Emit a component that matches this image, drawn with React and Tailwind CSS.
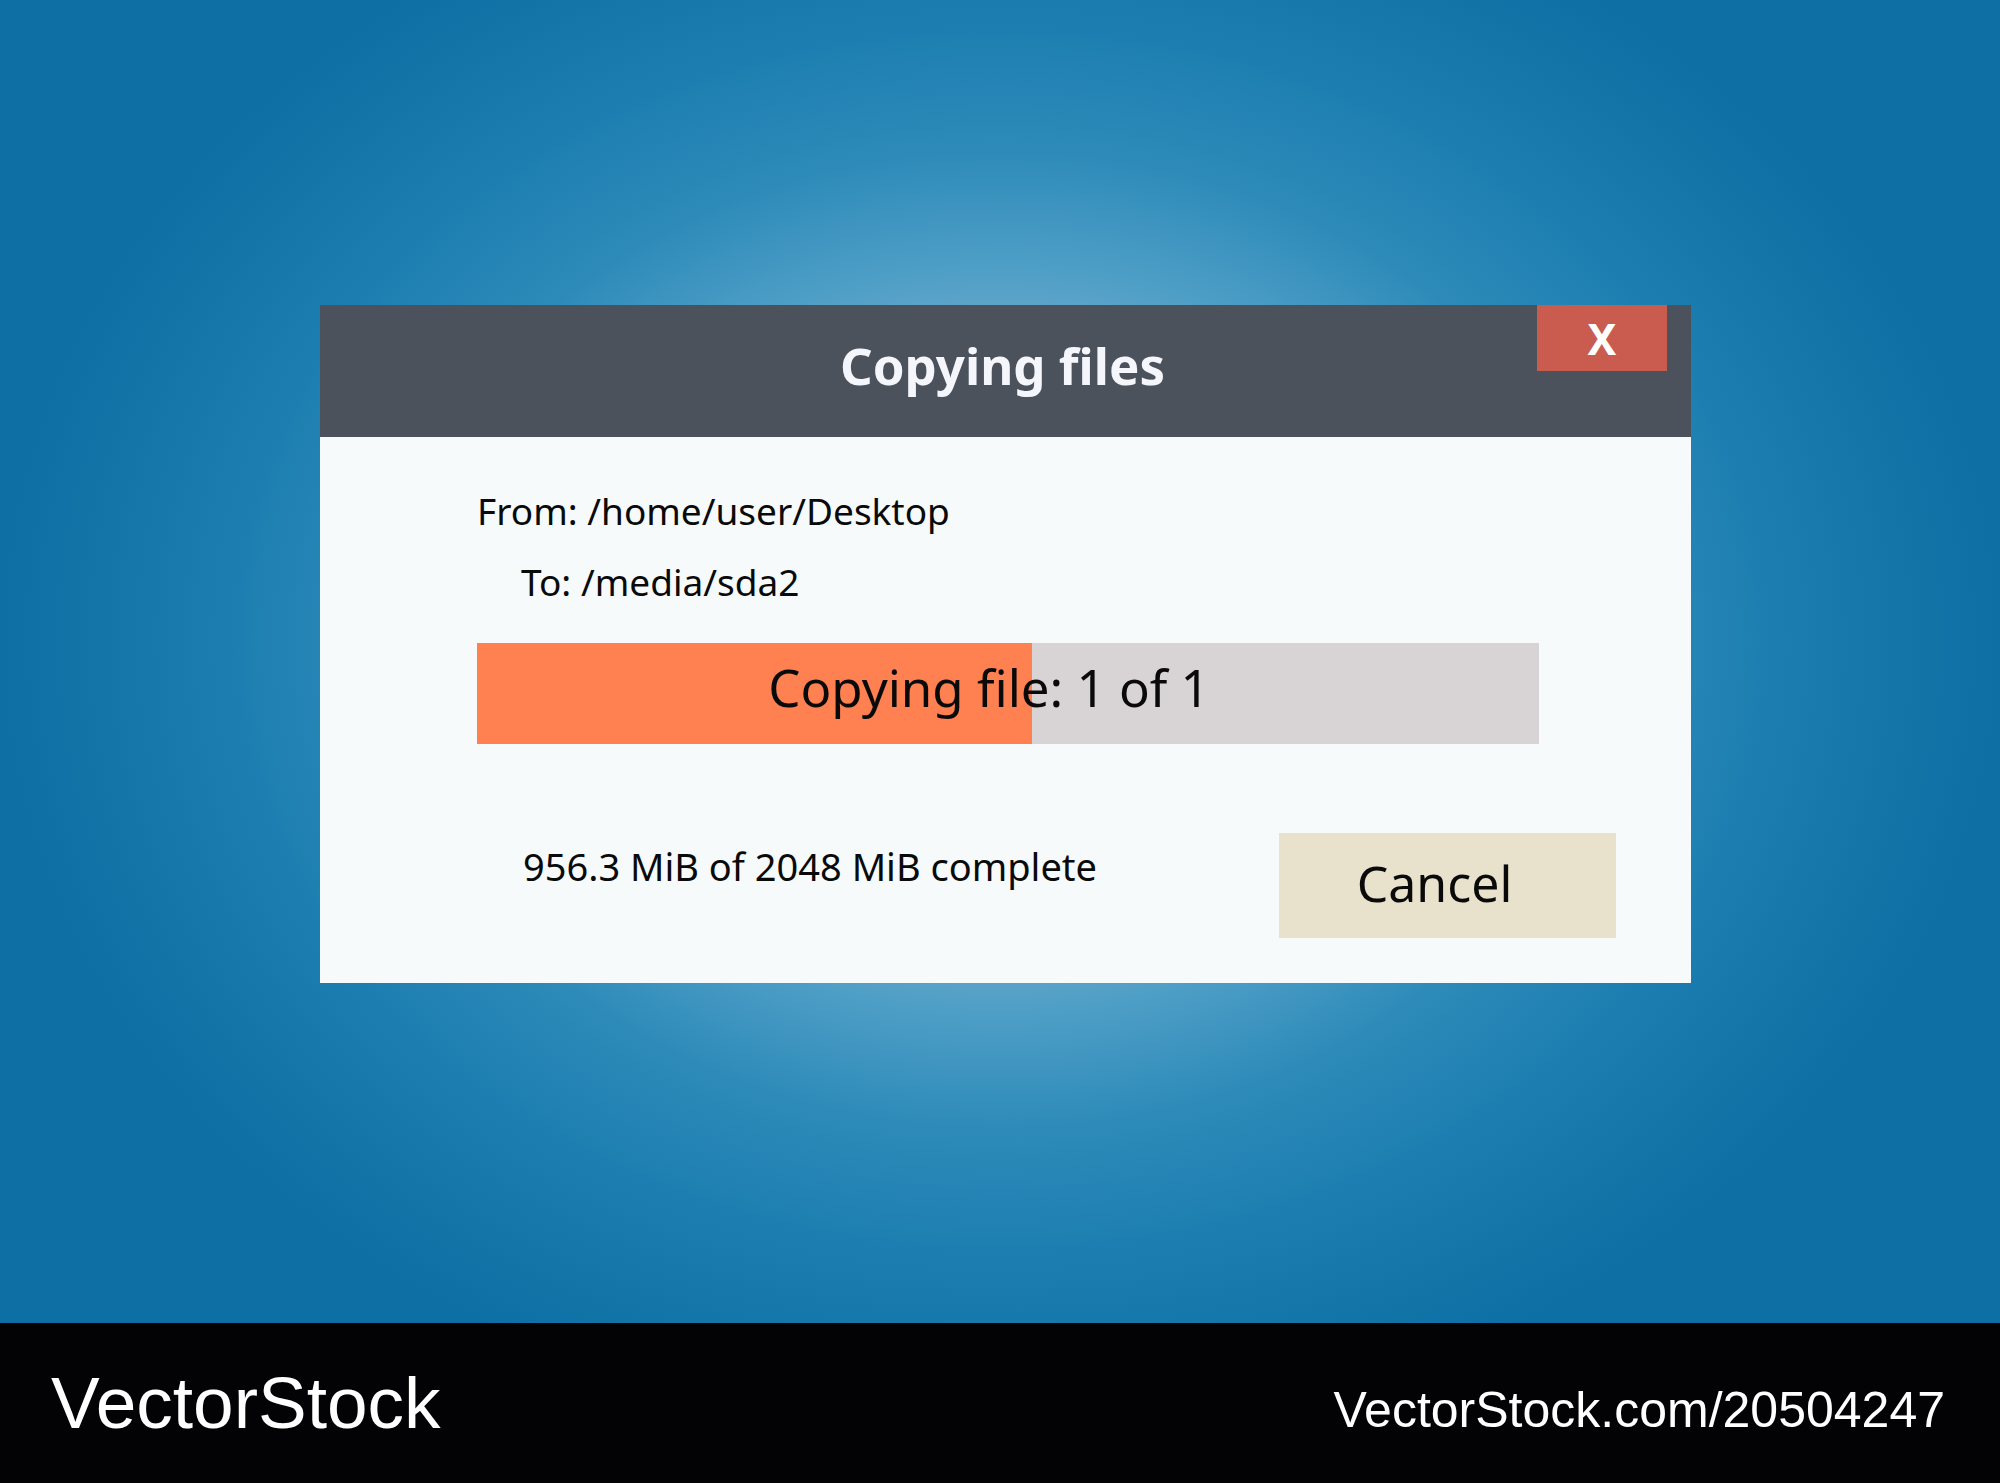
export default function App() {
  return (
    <div className="w-[2000px] h-[1483px] flex flex-col overflow-hidden">
      <div className="h-[1323px] pt-[305px] pl-[320px] bg-[radial-gradient(ellipse_1000px_800px_at_50%_640px,#7db6d4_0%,#6eaacb_32%,#62a5ca_40%,#4d9ec6_47%,#2e8bb9_61%,#1b7db0_78%,#1475a8_90%,#0d6fa4_100%)]">
        <div className="w-[1371px] h-[678px] flex flex-col bg-[#f6fafa] font-['Noto_Sans',sans-serif]">
          <div className="relative h-[132px] flex items-center justify-center pb-[12px] bg-[#4b525c]">
            <span className="text-[51px] leading-none font-bold text-[#f5f6fb] pr-[6px]">Copying files</span>
            <div className="absolute top-0 right-[24px] w-[130px] h-[66px] flex items-center justify-center bg-[#c95c4f]">
              <span className="text-[43px] leading-none font-bold text-white">X</span>
            </div>
          </div>
          <div className="flex-1 flex flex-col pl-[157px] pt-[55px] text-[#0a0a0a]">
            <div className="text-[37px] leading-none">From: /home/user/Desktop</div>
            <div className="text-[37px] leading-none mt-[34px] pl-[44px]">To: /media/sda2</div>
            <div className="relative mt-[43px] w-[1062px] h-[101px] bg-[#d8d4d5] flex items-center justify-center pb-[13px] pr-[38px]">
              <div className="absolute left-0 top-0 h-full w-[555px] bg-[#ff8050]"></div>
              <span className="relative text-[51px] leading-none">Copying file: 1 of 1</span>
            </div>
            <div className="flex items-start mt-[89px]">
              <div className="w-[802px] pl-[46px] mt-[14px] text-[38px] leading-none">956.3 MiB of 2048 MiB complete</div>
              <div className="w-[337px] h-[105px] bg-[#e8e2cc] flex items-center justify-center pr-[26px] pb-[6px]">
                <span className="text-[50px] leading-none">Cancel</span>
              </div>
            </div>
          </div>
        </div>
      </div>
      <div className="h-[160px] bg-[#030305] flex justify-between items-start font-['Liberation_Sans',Arial,sans-serif] text-white">
        <div className="pl-[51px] mt-[43px] text-[73px] leading-none">VectorStock</div>
        <div className="pr-[55px] mt-[62px] text-[50px] leading-none">VectorStock.com/20504247</div>
      </div>
    </div>
  );
}
